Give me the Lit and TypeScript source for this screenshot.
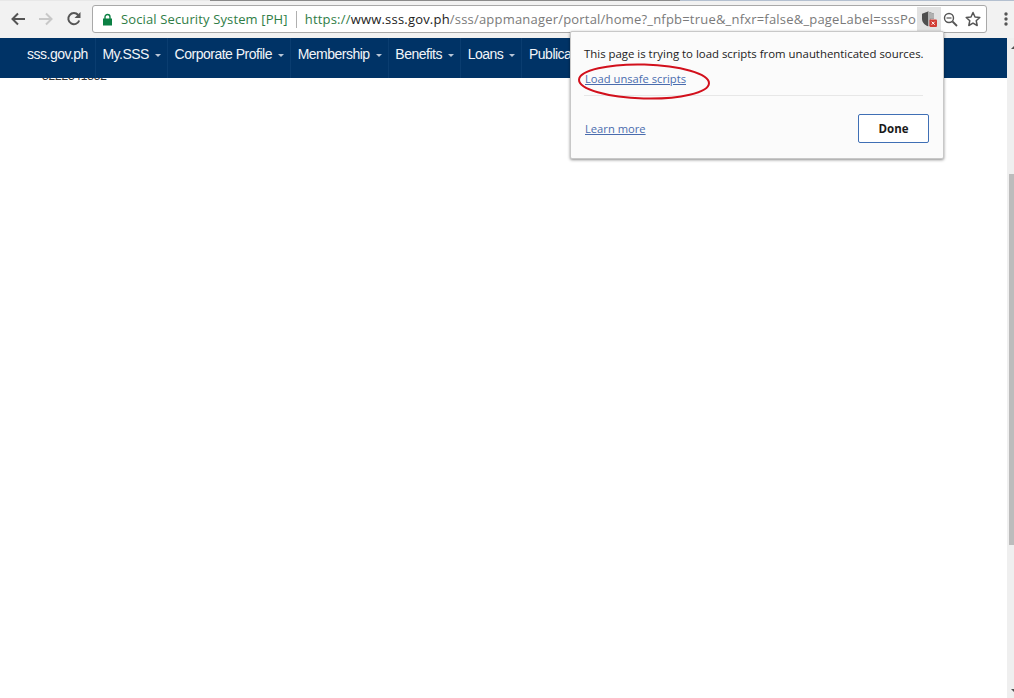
import { LitElement, html, css } from "lit";
import { customElement } from "lit/decorators.js";

const NAV: [string, boolean][] = [
  ["sss.gov.ph", false],
  ["My.SSS", true],
  ["Corporate Profile", true],
  ["Membership", true],
  ["Benefits", true],
  ["Loans", true],
  ["Publications", true],
];

@customElement("app-root")
export class AppRoot extends LitElement {
  static styles = css`
    :host { display: block; width: 1014px; height: 698px; position: relative; overflow: hidden; background: #fff; font-family: "Open Sans", "Noto Sans", sans-serif; }
    .tabstrip { height: 1px; background: linear-gradient(90deg, #e8e8e8 0 210px, #8b8b8b 210px 680px, #b4c0d0 680px); }
    .toolbar { height: 37px; background: #f2f2f2; display: flex; align-items: center; box-sizing: border-box; padding: 0 0 1px 0; }
    .navbtn { width: 28px; height: 28px; display: flex; align-items: center; justify-content: center; flex: none; }
    .navbtns { display: flex; margin-left: 4px; width: 88px; gap: 0; }
    .omni { width: 895px; height: 28px; box-sizing: border-box; background: #fff; border: 1px solid #a9a9a9; border-radius: 3px; display: flex; align-items: center; position: relative; flex: none; }
    .lock { margin-left: 9px; flex: none; width: 11px; height: 13px; }
    .secure { color: #2f7d46; font-size: 13px; margin-left: 8px; white-space: nowrap; letter-spacing: 0.13px; }
    .sep { width: 1px; height: 17px; background: #b0b0b0; margin: 0 8px; flex: none; }
    .url { font-size: 13px; color: #7a7a7a; white-space: nowrap; overflow: hidden; width: 611px; letter-spacing: 0.2px; flex: none; }
    .url b { font-weight: 400; color: #222; }
    .url i { font-style: normal; color: #2f7d46; }
    .shieldbox { width: 24px; height: 24px; background: #e2e2e2; display: flex; align-items: center; justify-content: center; flex: none; margin-left: 1px; }
    .omni-ic { width: 21px; height: 22px; display: flex; align-items: center; justify-content: center; flex: none; }
    .omni-ic.first { margin-left: 0; width: 20px; }
    .omni-ic.star { margin-left: 2px; }
    .menu { margin-left: 13px; width: 12px; display: flex; justify-content: center; flex: none; }
    .main { display: flex; height: 660px; }
    .page { flex: 1; min-width: 0; }
    .bar { height: 40px; box-sizing: border-box; background: #003366; display: flex; padding-left: 21px; }
    .item { display: flex; align-items: center; box-sizing: border-box; padding: 0 6.2px 8px 6.5px; color: #f2f5f9; font-family: "Liberation Sans", Arial, sans-serif; font-size: 14px; letter-spacing: -0.5px; white-space: nowrap; border-right: 1px solid #0a3d70; gap: 6px; height: 40px; }
    .item:first-child { padding-left: 6px; padding-right: 7px; }
    .item:last-child { border-right: none; }
    .caret { width: 0; height: 0; border-left: 3.5px solid transparent; border-right: 3.5px solid transparent; border-top: 3.5px solid #b9c6d6; margin-top: 2px; }
    .clip { height: 4px; overflow: hidden; padding-left: 42px; }
    .clip span { display: block; margin-top: -8px; font: 12px/12px "Liberation Sans", Arial, sans-serif; letter-spacing: -0.2px; color: #333; }
    .track { width: 7px; flex: none; background: #efefef; position: relative; }
    .thumb { position: absolute; left: 2px; right: 0; top: 136px; height: 371px; background: #bcbcbc; }
    .arrow { position: absolute; left: 4px; top: 651px; width: 0; height: 0; border-left: 3px solid transparent; border-right: 3px solid transparent; border-top: 3px solid #505050; }
    .arrow.up { top: 8px; border-top: none; border-bottom: 3px solid #505050; }
    .popup { position: absolute; left: 570px; top: 31px; width: 374px; height: 128px; box-sizing: border-box; background: #fbfbfb; border: 1px solid #c8c8c8; border-radius: 2px; box-shadow: 0 1px 3px rgba(0,0,0,.45); padding: 14px 14px 0 13px; font-size: 11.4px; color: #222; display: flex; flex-direction: column; }
    .msg { line-height: 16px; white-space: nowrap; margin-right: -4px; }
    .link { color: #4a6cae; text-decoration: underline; font-size: 11.2px; white-space: nowrap; }
    .l1 { margin-top: 9px; line-height: 16px; }
    .hr { height: 1px; background: #e7e7e7; margin-top: 8px; margin-right: 6px; }
    .foot { display: flex; justify-content: space-between; align-items: center; margin-top: 18px; padding-left: 1px; }
    .done { width: 71px; height: 29px; box-sizing: border-box; border: 1px solid #3f6fb5; border-radius: 2px; background: #fff; font-weight: 700; font-size: 11.5px; color: #1a1a1a; display: flex; align-items: center; justify-content: center; }
    .l1 .link { margin-left: 1px; }
    .ellipse { position: absolute; left: 577px; top: 62px; width: 134px; height: 40px; pointer-events: none; }
  `;

  render() {
    return html`
      <div class="tabstrip"></div>
      <div class="toolbar">
        <div class="navbtns">
          <div class="navbtn">
            <svg width="16" height="16" viewBox="0 0 16 16"><path d="M15 8H3M8 2.500 2.500 8 8 13.500" fill="none" stroke="#555" stroke-width="2"/></svg>
          </div>
          <div class="navbtn">
            <svg width="16" height="16" viewBox="0 0 16 16"><path d="M1 8h12M8 2.500 13.500 8 8 13.500" fill="none" stroke="#c8c8c8" stroke-width="2"/></svg>
          </div>
          <div class="navbtn">
            <svg width="16" height="16" viewBox="0 0 16 16"><path d="M13.200 9.500A5.600 5.600 0 1 1 12.200 4" fill="none" stroke="#555" stroke-width="2"/><path d="M14.500 1v6h-6z" fill="#555"/></svg>
          </div>
        </div>
        <div class="omni">
          <svg class="lock" viewBox="0 0 11 13"><path d="M3 6V4a2.500 2.500 0 0 1 5 0v2" fill="none" stroke="#0b8043" stroke-width="1.400"/><rect x="1" y="5.500" width="9" height="7" fill="#0b8043"/></svg>
          <span class="secure">Social Security System [PH]</span>
          <span class="sep"></span>
          <span class="url"><i>https://</i><b>www.sss.gov.ph</b>/sss/appmanager/portal/home?_nfpb=true&amp;_nfxr=false&amp;_pageLabel=sssPo</span>
          <div class="shieldbox">
            <svg width="16" height="18" viewBox="0 0 16 18"><path d="M7 1.500 1 3.800v5c0 3.500 2.500 6.200 6 7.500 1-.4 1.700-.8 2.400-1.400V8.500H13V3.800z" fill="#4f4f4f"/><path d="M7 1.500v14.800c1-.4 1.700-.8 2.400-1.400V8.500H13V3.800z" fill="#b0b0b0"/><rect x="8.500" y="9.500" width="7.500" height="7.500" rx="1" fill="#d23b33"/><path d="M10.700 11.700l3 3m0-3-3 3" stroke="#fff" stroke-width="1"/></svg>
          </div>
          <div class="omni-ic first">
            <svg width="15" height="15" viewBox="0 0 15 15"><circle cx="6" cy="6" r="4.500" fill="none" stroke="#555" stroke-width="1.400"/><path d="M9.500 9.500 14 14" stroke="#555" stroke-width="1.800"/><path d="M3.500 6h5" stroke="#555" stroke-width="1.200"/></svg>
          </div>
          <div class="omni-ic star">
            <svg width="16" height="16" viewBox="0 0 16 16"><path d="M8 1.500l2 4.500 4.800.5-3.600 3.200 1 4.800L8 12.100 3.800 14.500l1-4.800L1.200 6.500 6 6z" fill="none" stroke="#555" stroke-width="1.500" stroke-linejoin="round"/></svg>
          </div>
        </div>
        <div class="menu">
          <svg width="4" height="14" viewBox="0 0 4 14"><circle cx="2" cy="2" r="1.700" fill="#555"/><circle cx="2" cy="7" r="1.700" fill="#555"/><circle cx="2" cy="12" r="1.700" fill="#555"/></svg>
        </div>
      </div>
      <div class="main">
        <div class="page">
          <div class="bar">
            ${NAV.map(([t, c]) => html`<div class="item">${t}${c ? html`<span class="caret"></span>` : ""}</div>`)}
          </div>
          <div class="clip"><span>3222341852</span></div>
        </div>
        <div class="track"><div class="thumb"></div><div class="arrow up"></div><div class="arrow"></div></div>
      </div>
      <div class="popup">
        <div class="msg">This page is trying to load scripts from unauthenticated sources.</div>
        <div class="l1"><span class="link">Load unsafe scripts</span></div>
        <div class="hr"></div>
        <div class="foot"><span class="link">Learn more</span><div class="done">Done</div></div>
      </div>
      <svg class="ellipse" viewBox="0 0 134 40">
        <ellipse cx="67" cy="19.500" rx="65" ry="17" fill="none" stroke="#d2101c" stroke-width="2" transform="rotate(1.500 67 19.500)"/>
      </svg>
    `;
  }
}
